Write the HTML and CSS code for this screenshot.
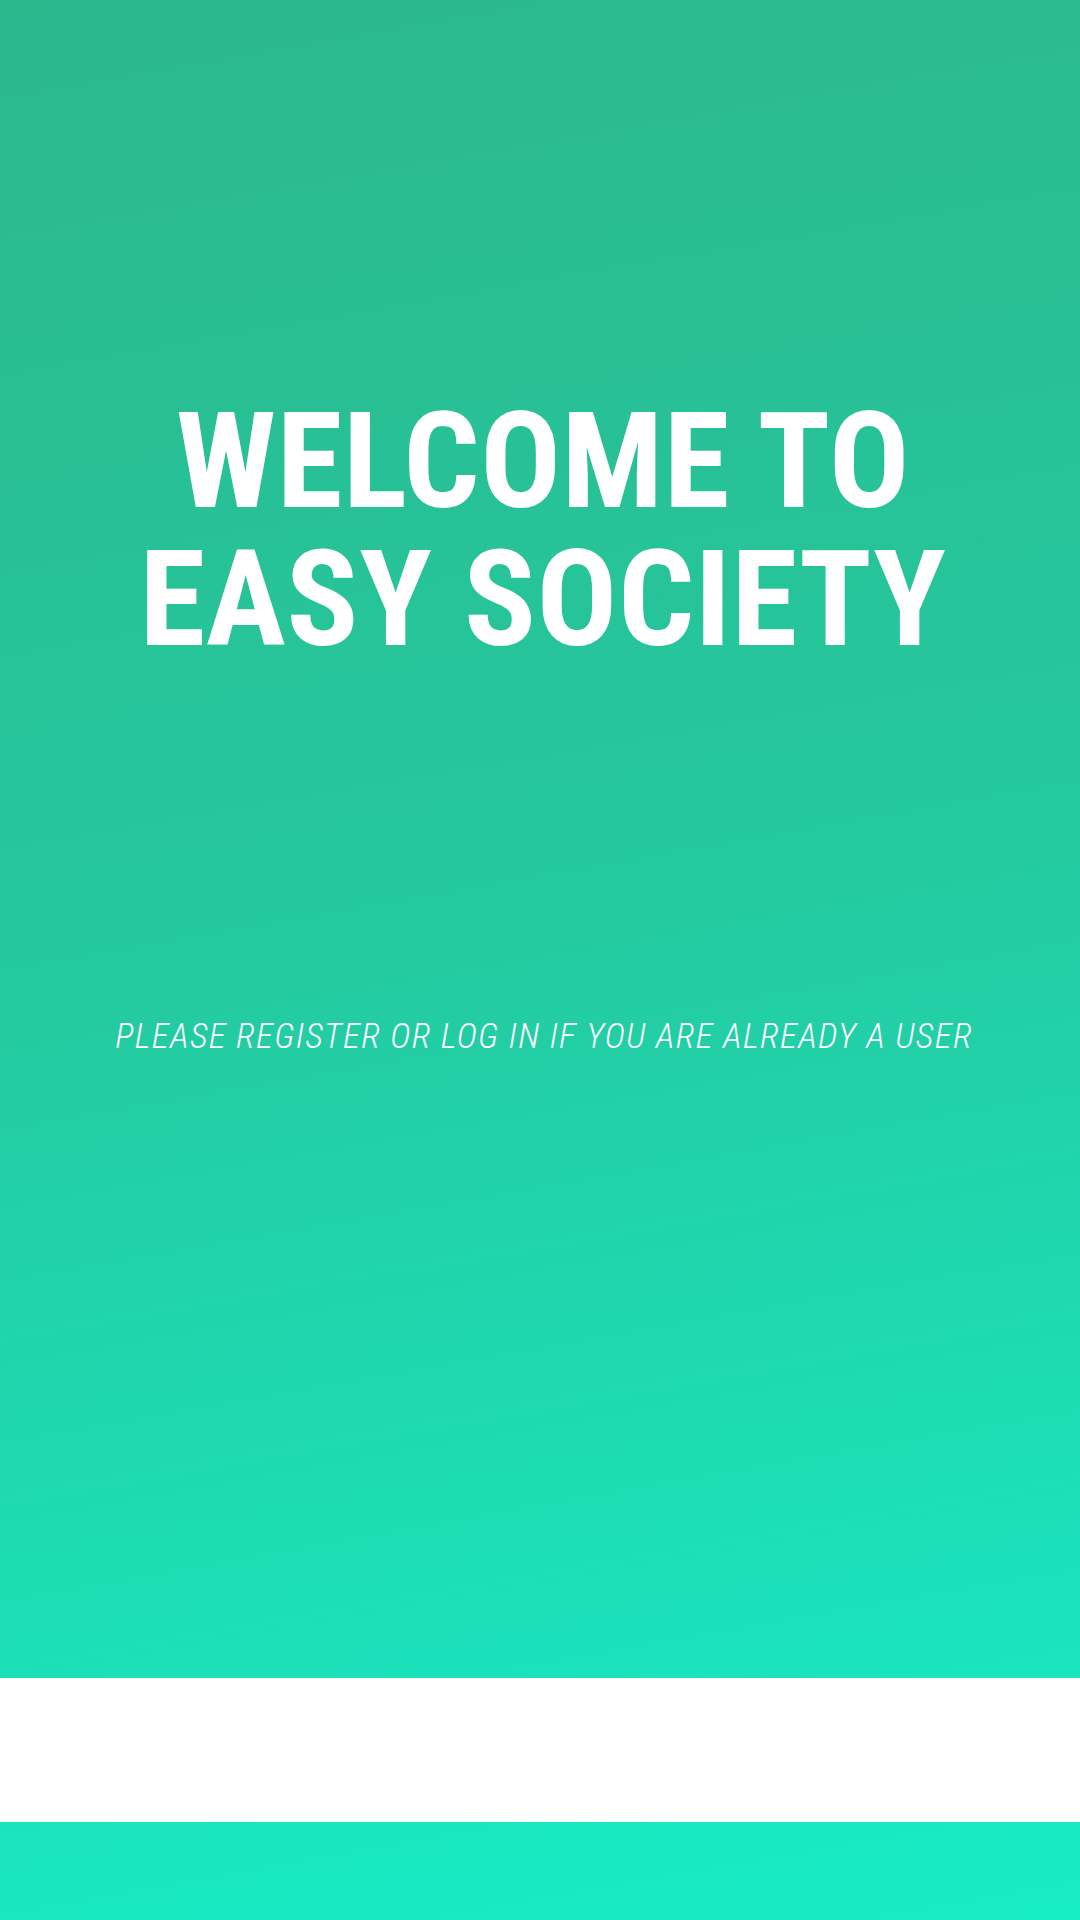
FILE: index.html
```html
<!DOCTYPE html>
<html lang="en">
<head>
<meta charset="utf-8">
<title>Easy Society</title>
<link rel="stylesheet" href="styles.css">
</head>
<body>
<div class="screen">
  <main class="hero">
    <h1 class="title">WELCOME TO<br>EASY SOCIETY</h1>
    <p class="subtitle">PLEASE REGISTER OR LOG IN IF YOU ARE ALREADY A USER</p>
  </main>
  <div class="band"></div>
  <div class="footer"></div>
</div>
</body>
</html>
```

FILE: styles.css
```css
html, body {
  margin: 0;
  padding: 0;
}
body {
  width: 1080px;
  height: 1920px;
  overflow: hidden;
  font-family: "Roboto Condensed", Roboto, "Liberation Sans", sans-serif;
}
.screen {
  width: 1080px;
  height: 1920px;
  display: flex;
  flex-direction: column;
  background: linear-gradient(170deg, #2cb78d 0%, #25c89e 45%, #17edc7 100%);
}
.hero {
  height: 1678px;
  display: flex;
  flex-direction: column;
  align-items: center;
  color: #ffffff;
}
.title {
  margin: 393px 0 0;
  font-weight: 700;
  font-size: 134px;
  line-height: 138px;
  letter-spacing: 0.5px;
  text-align: center;
  white-space: nowrap;
  padding-left: 6px;
}
.subtitle {
  margin: 348px 0 0;
  font-style: italic;
  font-weight: 300;
  font-size: 35px;
  line-height: 40px;
  letter-spacing: 1.3px;
  white-space: nowrap;
  padding-left: 8px;
}
.band {
  height: 144px;
  background: #ffffff;
}
.footer {
  flex: 1;
}
```
